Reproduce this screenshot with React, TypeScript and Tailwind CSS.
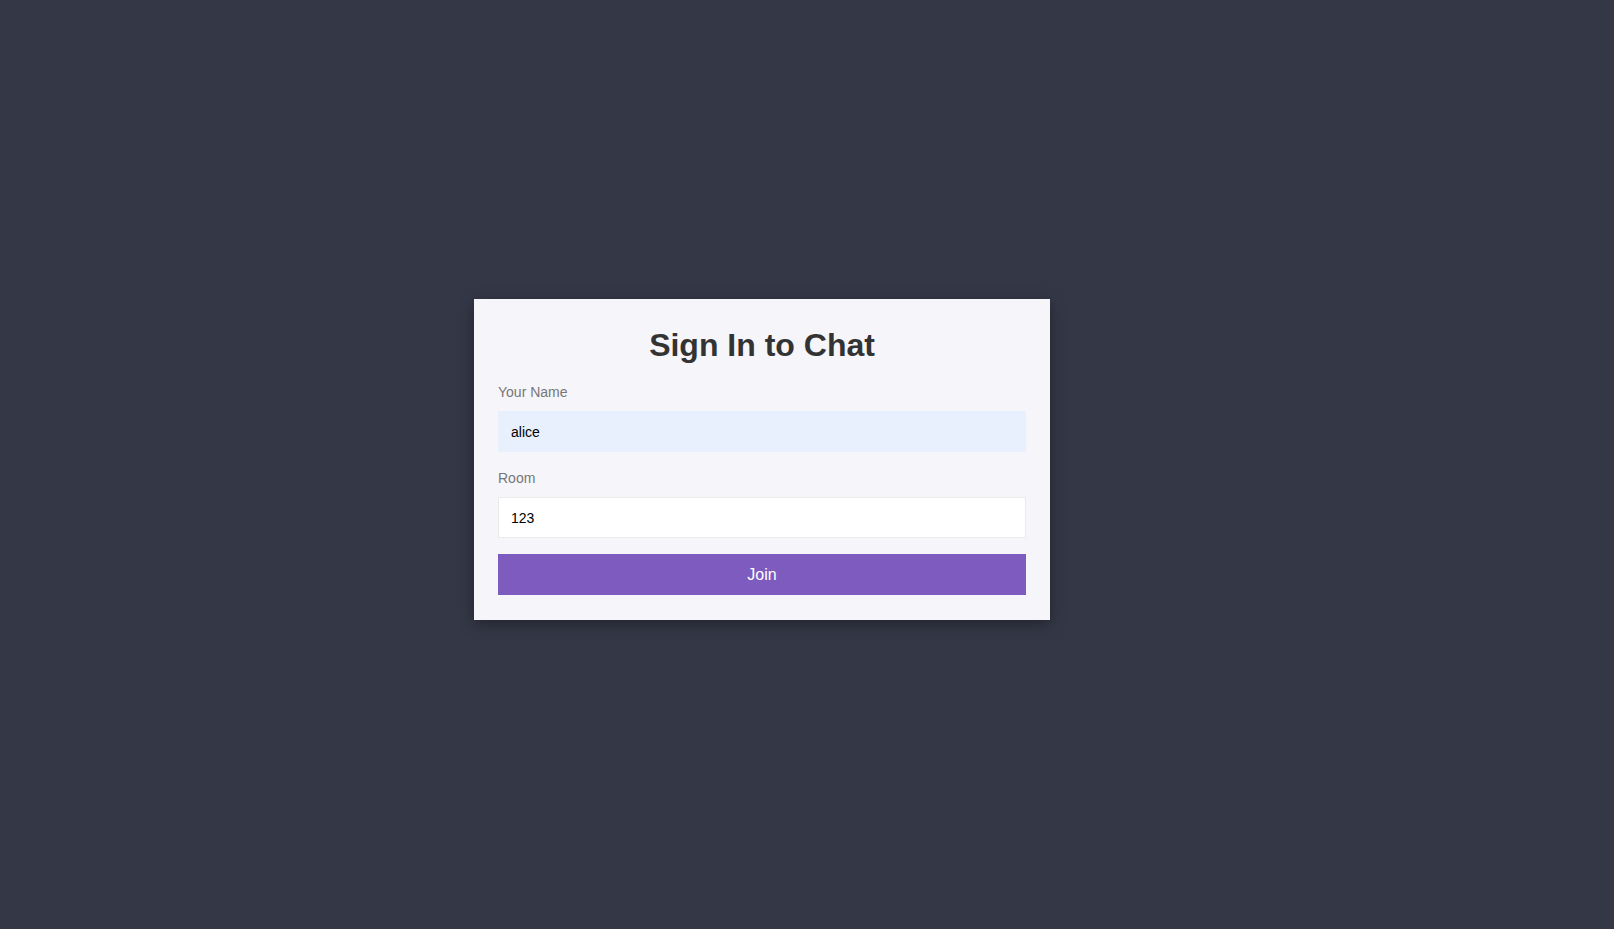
export default function App() {
  return (
    <div
      className="min-h-screen w-full flex items-center justify-center bg-[#343746] pr-[90px] pb-[10px]"
      style={{ fontFamily: '"Liberation Sans", Arial, sans-serif' }}
    >
      {/* Sign in card */}
      <form
        className="w-[576px] bg-[#f6f5fa] px-6 pt-[26px] pb-[25px] flex flex-col shadow-[0_4px_14px_rgba(0,0,0,0.35)]"
        onSubmit={(e) => e.preventDefault()}
      >
        <h1 className="text-[32px] leading-[40px] font-bold text-center text-[#333333]">
          Sign In to Chat
        </h1>

        <label className="mt-[17px] text-[14px] leading-5 text-[#777777]">Your Name</label>
        <input
          className="mt-[9px] h-[41px] w-full px-3 border border-[#e8f0fe] bg-[#e8f0fe] text-[14px] text-black outline-none"
          defaultValue="alice"
        />

        <label className="mt-4 text-[14px] leading-5 text-[#777777]">Room</label>
        <input
          className="mt-[9px] h-[41px] w-full px-3 border border-[#ebebeb] bg-white text-[14px] text-black outline-none"
          defaultValue="123"
        />

        <button
          type="submit"
          className="mt-4 h-[41px] w-full bg-[#7e5bbe] text-white text-[16px]"
        >
          Join
        </button>
      </form>
    </div>
  );
}
